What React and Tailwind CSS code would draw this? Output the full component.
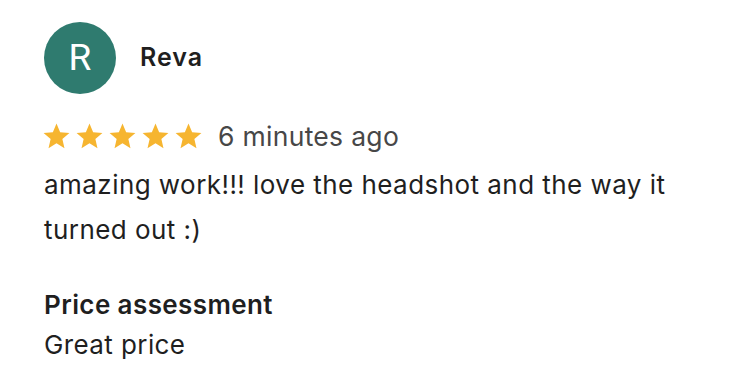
const Star = () => (
  <svg viewBox="0 0 24 24" className="w-[31px] h-[31px]" fill="#f6b530">
    <path d="M12 17.27L18.18 21l-1.64-7.03L22 9.24l-7.19-.61L12 2 9.19 8.63 2 9.24l5.46 4.73L5.82 21z" />
  </svg>
);

const App = () => {
  return (
    <div className="w-[732px] h-[386px] bg-white font-['Inter',sans-serif] px-[44px] pt-[22px]">
      <div className="flex items-center gap-[24px]">
        <div className="w-[72px] h-[72px] rounded-full bg-[#2f7b6f] flex items-center justify-center text-white text-[37px] font-['Roboto',sans-serif]">
          R
        </div>
        <div className="text-[25px] font-semibold tracking-[1px] text-[#1f1f1f]">Reva</div>
      </div>

      <div className="flex items-center mt-[23px]">
        <div className="flex gap-[2px] -ml-[3px]">
          <Star />
          <Star />
          <Star />
          <Star />
          <Star />
        </div>
        <span className="ml-[14px] text-[26.5px] tracking-[0.3px] text-[#474747]">6 minutes ago</span>
      </div>

      <p className="mt-[5px] text-[26px] leading-[45px] tracking-[0.45px] text-[#1f1f1f] max-w-[660px]">
        amazing work!!! love the headshot and the way it turned out :)
      </p>

      <div className="mt-[33px] text-[26px] leading-[40px] tracking-[0.4px] text-[#1f1f1f]">
        <div className="font-semibold">Price assessment</div>
        <div>Great price</div>
      </div>
    </div>
  );
};

export default App;
